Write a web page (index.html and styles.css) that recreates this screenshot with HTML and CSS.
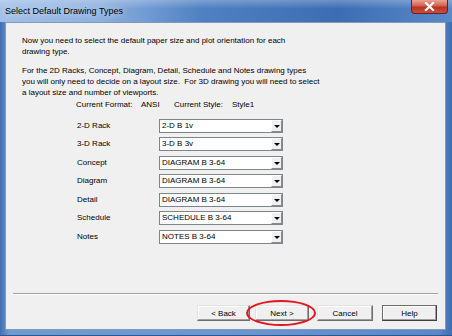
FILE: index.html
```html
<!DOCTYPE html>
<html lang="en">
<head>
    <meta charset="UTF-8">
    <title>Select Default Drawing Types</title>
    <link rel="stylesheet" href="styles.css">
</head>
<body>
<div class="window">
    <div class="titlebar">
        <span class="title">Select Default Drawing Types</span>
        <div class="close">
            <svg width="11" height="9" viewBox="0 0 11 9">
                <path d="M2 1 L9 8 M9 1 L2 8" stroke="#fff" stroke-width="2.2" stroke-linecap="square"/>
            </svg>
        </div>
    </div>
    <div class="client">
        <p class="intro">Now you need to select the default paper size and plot orientation for each<br>drawing type.</p>
        <p class="intro second">For the 2D Racks, Concept, Diagram, Detail, Schedule and Notes drawing types<br>you will only need to decide on a layout size.&nbsp; For 3D drawing you will need to select<br>a layout size and number of viewports.</p>
        <div class="format">
            <span class="f_label">Current Format:</span>
            <span class="f_value">ANSI</span>
            <span class="f_style">Current Style:</span>
            <span>Style1</span>
        </div>
        <div class="rows">
            <label>2-D Rack</label>
            <div class="combo"><span class="combo_text">2-D B 1v</span><span class="combo_btn"><i></i></span></div>
            <label>3-D Rack</label>
            <div class="combo"><span class="combo_text">3-D B 3v</span><span class="combo_btn"><i></i></span></div>
            <label>Concept</label>
            <div class="combo"><span class="combo_text">DIAGRAM B 3-64</span><span class="combo_btn"><i></i></span></div>
            <label>Diagram</label>
            <div class="combo"><span class="combo_text">DIAGRAM B 3-64</span><span class="combo_btn"><i></i></span></div>
            <label>Detail</label>
            <div class="combo"><span class="combo_text">DIAGRAM B 3-64</span><span class="combo_btn"><i></i></span></div>
            <label>Schedule</label>
            <div class="combo"><span class="combo_text">SCHEDULE B 3-64</span><span class="combo_btn"><i></i></span></div>
            <label>Notes</label>
            <div class="combo"><span class="combo_text">NOTES B 3-64</span><span class="combo_btn"><i></i></span></div>
        </div>
        <div class="spacer"></div>
        <div class="separator"></div>
        <div class="buttons">
            <button type="button" class="btn btn_back">&lt; Back</button>
            <div class="next_wrap">
                <button type="button" class="btn btn_next">Next &gt;</button>
                <div class="ring"></div>
            </div>
            <button type="button" class="btn btn_cancel">Cancel</button>
            <button type="button" class="btn btn_help">Help</button>
        </div>
    </div>
</div>
</body>
</html>
```

FILE: styles.css
```css
html,body{
    margin: 0;
    padding: 0;
}
body{
    font-family: "Liberation Sans", Arial, sans-serif;
    font-size: 8px;
    color: #000;
}
.window{
    box-sizing: border-box;
    width: 452px;
    height: 336px;
    display: flex;
    flex-direction: column;
    background: linear-gradient(to right, #3f6fb3 0%, #6f9bd3 2%, #6b97d0 50%, #5a88c8 97%, #3f6fb3 100%);
    border-bottom: 1px solid #2d5592;
}
.titlebar{
    height: 22px;
    display: flex;
    align-items: flex-start;
    padding: 0 4px 0 5px;
    background: linear-gradient(to bottom, rgba(255,255,255,0.25), rgba(255,255,255,0) 40%),
                linear-gradient(to right, #a3c1e8 0%, #8cb0e0 22%, #4f80c2 45%, #3c6db4 75%, #5a89c9 100%);
}
.title{
    line-height: 22px;
    font-size: 9px;
    text-shadow: 0 0 6px rgba(255,255,255,0.9);
}
.close{
    margin-left: auto;
    width: 37px;
    height: 14px;
    box-sizing: border-box;
    border: 1px solid #6b1f1c;
    border-top: none;
    border-radius: 0 0 4px 4px;
    background: linear-gradient(to bottom, #e9a494 0%, #d4604f 45%, #b8321f 55%, #c9503b 100%);
    display: flex;
    align-items: center;
    justify-content: center;
}
.client{
    flex: 1;
    display: flex;
    flex-direction: column;
    margin: 0 6px 5px 5px;
    background-color: #f0f0f0;
    border: 1px solid #8299b9;
}
.intro{
    margin: 12px 0 0 16px;
    line-height: 11px;
    white-space: nowrap;
}
.second{
    margin-top: 8px;
}
.format{
    display: flex;
    margin: 1px 0 0 70px;
    line-height: 11px;
}
.f_label{
    width: 65px;
}
.f_value{
    width: 33px;
}
.f_style{
    width: 58px;
}
.rows{
    display: grid;
    grid-template-columns: 82px 124px;
    grid-auto-rows: 14px;
    row-gap: 4.5px;
    margin: 8.5px 0 0 71px;
}
.rows label{
    line-height: 14px;
}
.combo{
    box-sizing: border-box;
    display: flex;
    align-items: center;
    background-color: #fff;
    border: 1px solid #7f858d;
}
.combo_text{
    flex: 1;
    padding-left: 2px;
    line-height: 12px;
}
.combo_btn{
    box-sizing: border-box;
    width: 11px;
    height: 12px;
    border: 1px solid;
    border-color: #fff #8a8a8a #8a8a8a #fff;
    background-color: #f0f0f0;
    display: flex;
    align-items: center;
    justify-content: center;
}
.combo_btn i{
    width: 0;
    height: 0;
    border-left: 3px solid transparent;
    border-right: 3px solid transparent;
    border-top: 3px solid #000;
    margin-top: 1px;
}
.spacer{
    flex: 1;
}
.separator{
    margin: 0 7px;
    height: 0;
    border-top: 1px solid #a0a0a0;
    border-bottom: 1px solid #fff;
}
.buttons{
    display: flex;
    justify-content: flex-end;
    margin: 10px 8px 8px 0;
}
.btn{
    box-sizing: border-box;
    height: 16px;
    padding: 0;
    font-family: inherit;
    font-size: 8px;
    color: #000;
    background-color: #f0f0f0;
    border: 1px solid;
    border-color: #e3e3e3 #6d6d6d #6d6d6d #e3e3e3;
    box-shadow: inset -1px -1px 0 #a0a0a0, inset 1px 1px 0 #fff;
}
.btn_back{
    width: 53px;
}
.next_wrap{
    position: relative;
    margin-left: 5px;
}
.btn_next{
    width: 54px;
}
.ring{
    position: absolute;
    left: -9px;
    top: -5px;
    width: 70px;
    height: 26px;
    box-sizing: border-box;
    border: 2px solid #e3161d;
    border-radius: 50%;
}
.btn_cancel{
    width: 56px;
    margin-left: 8px;
}
.btn_help{
    width: 55px;
    margin-left: 9px;
    border-color: #6d6d6d #404040 #404040 #6d6d6d;
}
```
